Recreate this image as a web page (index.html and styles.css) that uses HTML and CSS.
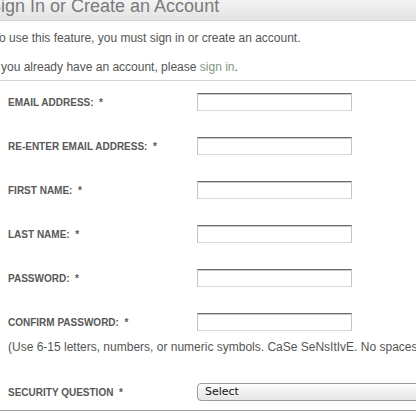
FILE: index.html
```html
<!DOCTYPE html>
<html>
<head>
<meta charset="utf-8">
<link rel="stylesheet" href="styles.css">
</head>
<body>
<div class="page">
  <div class="header"><h1 class="title">Sign In or Create an Account</h1></div>
  <p class="intro one">To use this feature, you must sign in or create an account.</p>
  <p class="intro two">If you already have an account, please <a class="link" href="#">sign in</a>.</p>
  <div class="sep"></div>
  <form class="form">
    <div class="row"><label class="label">EMAIL ADDRESS: &nbsp;*</label><span class="input"></span></div>
    <div class="row"><label class="label">RE-ENTER EMAIL ADDRESS: &nbsp;*</label><span class="input"></span></div>
    <div class="row"><label class="label">FIRST NAME: &nbsp;*</label><span class="input"></span></div>
    <div class="row"><label class="label">LAST NAME: &nbsp;*</label><span class="input"></span></div>
    <div class="row"><label class="label">PASSWORD: &nbsp;*</label><span class="input"></span></div>
    <div class="row"><label class="label">CONFIRM PASSWORD: &nbsp;*</label><span class="input"></span></div>
    <p class="hint">(Use 6-15 letters, numbers, or numeric symbols. CaSe SeNsItIvE. No spaces)</p>
    <div class="row sec"><label class="label">SECURITY QUESTION &nbsp;*</label><span class="select">Select</span></div>
  </form>
  <div class="bottom"></div>
</div>
</body>
</html>
```
FILE: styles.css
```css
html, body { margin: 0; padding: 0; background: #fff; }
body { width: 416px; height: 416px; overflow: hidden; font-family: "Liberation Sans", Arial, sans-serif; color: #555; }
.page { display: flex; flex-direction: column; }
.header {
  height: 20px; overflow: hidden;
  background: linear-gradient(#f3f3f3, #e3e3e3);
  border-bottom: 1px solid #d6d6d6;
}
.title {
  margin: -4px 0 0 -11px; padding: 0;
  font-size: 18px; font-weight: normal; line-height: 20px; color: #7a7a7a; white-space: nowrap;
}
.intro { margin: 0; font-size: 12px; line-height: 14px; white-space: nowrap; }
.one { margin-top: 10px; margin-left: -7px; }
.two { margin-top: 15px; margin-left: -9px; }
.link { color: #7f9a7f; text-decoration: none; }
.sep { height: 1px; background: #d4d4d4; margin-top: 6px; }
.form { display: flex; flex-direction: column; margin: -1px 0 0 0; }
.row { display: flex; align-items: center; height: 44px; }
.label {
  flex: 0 0 197px; padding-left: 8px; box-sizing: border-box;
  font-size: 10px; font-weight: bold; color: #585858; white-space: nowrap;
}
.input {
  flex: 0 0 155px; height: 18px; box-sizing: border-box;
  border: 1px solid #c4c4c4; border-top-color: #6e6e6e; border-bottom-color: #d8d8d8;
  box-shadow: inset 0 1px 0 #c8c8c8;
  background: #fff;
}
.hint { margin: -4px 0 0 8px; font-size: 12px; line-height: 14px; white-space: nowrap; }
.sec { height: 36px; margin-top: 20px; }
.select {
  flex: 0 0 240px; height: 18px; box-sizing: border-box;
  border: 1px solid #9a9a9a; border-radius: 4px;
  background: linear-gradient(#ffffff, #f0f0f0 50%, #e6e6e6);
  font-family: "DejaVu Sans", sans-serif; font-size: 11px; line-height: 16px; color: #111;
  padding-left: 7px; white-space: nowrap;
}
.bottom { height: 1px; background: #a0a0a0; }
```
